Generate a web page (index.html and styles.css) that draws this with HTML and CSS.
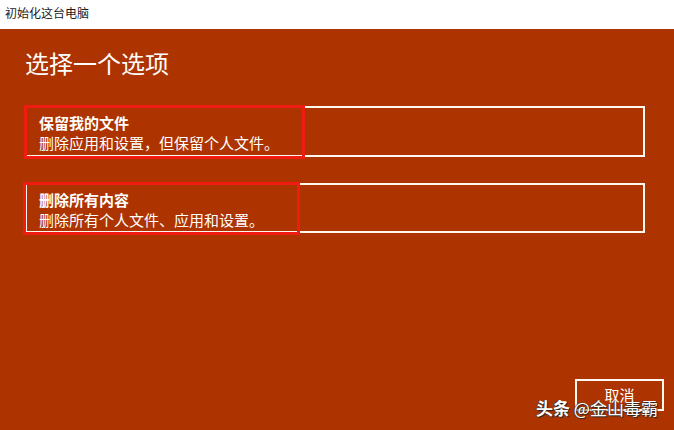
FILE: index.html
```html
<!DOCTYPE html>
<html lang="zh-CN">
<head>
<meta charset="utf-8">
<link rel="stylesheet" href="styles.css">
</head>
<body>
<div class="window">
  <div class="titlebar">初始化这台电脑</div>
  <div class="main">
    <h1 class="heading">选择一个选项</h1>
    <div class="options">
      <div class="option">
        <div class="opt-title">保留我的文件</div>
        <div class="opt-desc">删除应用和设置，但保留个人文件。</div>
        <div class="mark mark-1"></div>
      </div>
      <div class="option">
        <div class="opt-title">删除所有内容</div>
        <div class="opt-desc">删除所有个人文件、应用和设置。</div>
        <div class="mark mark-2"></div>
      </div>
    </div>
    <div class="footer">
      <button class="cancel">取消</button>
    </div>
    <div class="watermark"><b>头条</b> @金山毒霸</div>
  </div>
</div>
</body>
</html>
```
FILE: styles.css
```css
html, body {
  margin: 0;
  padding: 0;
}
body {
  width: 674px;
  height: 430px;
  overflow: hidden;
  font-family: "Noto Sans CJK SC", "Microsoft YaHei", "Noto Sans", sans-serif;
}
.window {
  display: flex;
  flex-direction: column;
  height: 430px;
}
.titlebar {
  height: 29px;
  background: #ffffff;
  color: #1a1a1a;
  font-size: 12px;
  line-height: 26px;
  padding-left: 5px;
  box-sizing: border-box;
}
.main {
  position: relative;
  flex: 1;
  background: #ad3400;
  display: flex;
  flex-direction: column;
  padding: 0 10px 0 25px;
}
.heading {
  margin: 16px 0 0 0;
  font-size: 24px;
  font-weight: normal;
  line-height: 36px;
  color: #ffffff;
}
.options {
  margin-top: 25px;
  margin-right: 19px;
  display: flex;
  flex-direction: column;
  gap: 26px;
}
.option {
  position: relative;
  border: 2px solid #fff8ee;
  padding: 5px 12px 2px 12px;
  box-sizing: border-box;
  height: 51px;
  color: #ffffff;
}
.option + .option {
  height: 50px;
}
.opt-title {
  font-size: 15px;
  font-weight: bold;
  line-height: 20px;
}
.opt-desc {
  font-size: 15px;
  line-height: 20px;
}
.mark {
  position: absolute;
  border: 3px solid #f01c12;
  box-sizing: border-box;
  pointer-events: none;
}
.mark-1 {
  left: -3px;
  top: -3px;
  width: 281px;
  height: 54px;
}
.mark-2 {
  left: -4px;
  top: -3px;
  width: 277px;
  height: 53px;
}
.footer {
  margin-top: auto;
  margin-bottom: 19px;
  display: flex;
  justify-content: flex-end;
}
.cancel {
  width: 89px;
  height: 32px;
  background: transparent;
  border: 2px solid #fff8ee;
  color: #ffffff;
  font-family: inherit;
  font-size: 15px;
  line-height: 20px;
  padding: 0;
}
.watermark {
  position: absolute;
  left: 536px;
  top: 368px;
  font-size: 17px;
  line-height: 22px;
  color: #ffffff;
  text-shadow: 1px 1px 1px #222, -1px 0 1px #444;
  white-space: nowrap;
}
.watermark b {
  font-weight: bold;
}
```
